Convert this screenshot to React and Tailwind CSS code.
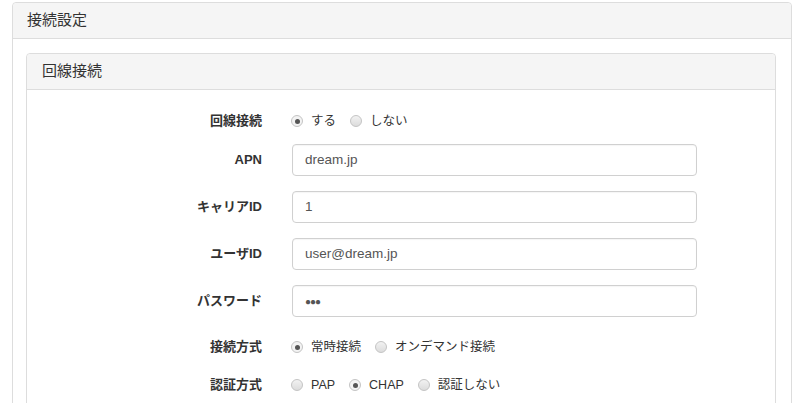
const font = { fontFamily: '"Liberation Sans", "Noto Sans CJK JP", sans-serif' };

function Radio({ checked, label }) {
  return (
    <label className="flex items-center mr-[14px]">
      <span
        className={`w-[12px] h-[12px] rounded-full border border-[#c4c4c4] flex items-center justify-center ${
          checked ? "bg-[#f3f3f3]" : "bg-gradient-to-b from-[#f2f2f2] to-[#dcdcdc]"
        }`}
      >
        {checked && <span className="w-[5px] h-[5px] rounded-full bg-[#555]" />}
      </span>
      <span className="ml-[8px] text-[12.5px] text-[#333]">{label}</span>
    </label>
  );
}

function Row({ label, children, className }) {
  return (
    <div className={`flex items-center ${className}`}>
      <div className="w-[235px] text-right text-[13px] font-bold text-[#333] shrink-0">{label}</div>
      <div className="ml-[29px] flex items-center">{children}</div>
    </div>
  );
}

function Field({ value }) {
  return (
    <div className="ml-px w-[405px] h-[32px] border border-[#d0d0d0] rounded-[4px] flex items-center px-[12px] text-[13.5px] text-[#555] shadow-[inset_0_1px_1px_rgba(0,0,0,0.04)]">
      {value}
    </div>
  );
}

export default function App() {
  return (
    <div className="h-[403px] overflow-hidden bg-white pt-[2px] pl-[12px]" style={font}>
      <div className="w-[780px] border border-[#ddd] rounded-t-[4px] h-[420px]">
        <div className="h-[36px] bg-[#f5f5f5] border-b border-[#ddd] flex items-center pl-[14px] text-[15px] text-[#333] rounded-t-[4px]">
          接続設定
        </div>
        <div className="pt-[14px] pl-[13px] pr-[15px]">
          <div className="border border-[#ddd] rounded-t-[4px] h-[400px]">
            <div className="h-[36px] bg-[#f5f5f5] border-b border-[#ddd] flex items-center pl-[15px] text-[15px] text-[#333] rounded-t-[4px]">
              回線接続
            </div>
            <div className="pt-[16px]">
              <Row label="回線接続" className="h-[30px] mb-[8px]">
                <Radio checked label="する" />
                <Radio label="しない" />
              </Row>
              <Row label="APN" className="mb-[15px]">
                <Field value="dream.jp" />
              </Row>
              <Row label="キャリアID" className="mb-[15px]">
                <Field value="1" />
              </Row>
              <Row label="ユーザID" className="mb-[15px]">
                <Field value="user@dream.jp" />
              </Row>
              <Row label="パスワード" className="mb-[15px]">
                <Field value={<span className="text-[10px] tracking-[-1px]">●●●</span>} />
              </Row>
              <Row label="接続方式" className="h-[30px] mb-[8px]">
                <Radio checked label="常時接続" />
                <Radio label="オンデマンド接続" />
              </Row>
              <Row label="認証方式" className="h-[30px]">
                <Radio label="PAP" />
                <Radio checked label="CHAP" />
                <Radio label="認証しない" />
              </Row>
            </div>
          </div>
        </div>
      </div>
    </div>
  );
}
